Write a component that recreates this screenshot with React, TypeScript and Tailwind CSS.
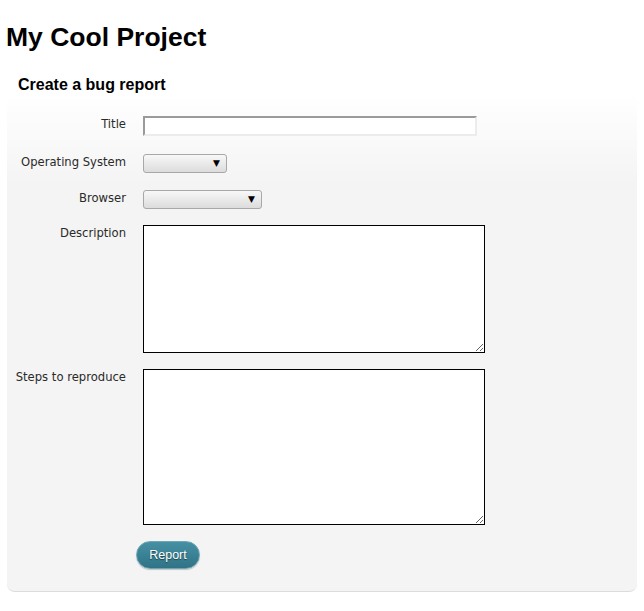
const labelCls =
  "w-[119px] shrink-0 text-right text-[11.6px] leading-[14px] text-[#2a2a2a] font-['DejaVu_Sans',sans-serif]";

const Row = ({ label, className, children }: { label: string; className?: string; children: React.ReactNode }) => (
  <div className={`flex items-start gap-[17px] ${className ?? ""}`}>
    <label className={`${labelCls} pt-px`}>{label}</label>
    {children}
  </div>
);

const FakeSelect = ({ width }: { width: string }) => (
  <div
    className={`${width} h-[19px] rounded-[3px] border border-[#a8a8a8] bg-[linear-gradient(#f8f8f8,#dcdcdc)] flex items-center justify-end pr-[6px]`}
  >
    <span className="text-[9px] leading-none text-black font-['DejaVu_Sans',sans-serif]">▼</span>
  </div>
);

export default function App() {
  return (
    <div className="min-h-screen bg-white px-[7px] font-['Liberation_Sans',Arial,sans-serif]">
      <h1 className="-ml-[1px] pt-[22px] text-[26.5px] leading-[30px] font-bold text-black">My Cool Project</h1>

      <form
        className="mt-[12px] rounded-[8px] border-b border-[#dcdcdc] bg-[linear-gradient(#ffffff_30px,#f4f4f4_120px)] pt-[12px] pb-[22px]"
        onSubmit={(e) => e.preventDefault()}
      >
        <h2 className="pl-[11px] text-[16px] leading-[18px] font-bold text-black">Create a bug report</h2>

        <Row label="Title" className="mt-[22px]">
          <input
            type="text"
            className="w-[334px] h-[20px] border-2 border-t-[#9a9a9a] border-l-[#9a9a9a] border-b-[#ececec] border-r-[#ececec] bg-white outline-none"
          />
        </Row>

        <Row label="Operating System" className="mt-[18px]">
          <FakeSelect width="w-[84px]" />
        </Row>

        <Row label="Browser" className="mt-[17px]">
          <FakeSelect width="w-[119px]" />
        </Row>

        <Row label="Description" className="mt-[16px]">
          <textarea className="block w-[342px] h-[128px] border border-black bg-white outline-none" />
        </Row>

        <Row label="Steps to reproduce" className="mt-[16px]">
          <textarea className="block w-[342px] h-[156px] border border-black bg-white outline-none" />
        </Row>

        <div className="mt-[16px] pl-[129px]">
          <button
            type="submit"
            className="w-[64px] h-[28px] rounded-full border border-[#6fa6b5] bg-[linear-gradient(#4690a4,#2f7386)] text-[12.5px] text-white [text-shadow:0_1px_1px_rgba(0,0,0,0.5)] shadow-[0_1px_1px_rgba(0,0,0,0.2)]"
          >
            Report
          </button>
        </div>
      </form>
    </div>
  );
}
